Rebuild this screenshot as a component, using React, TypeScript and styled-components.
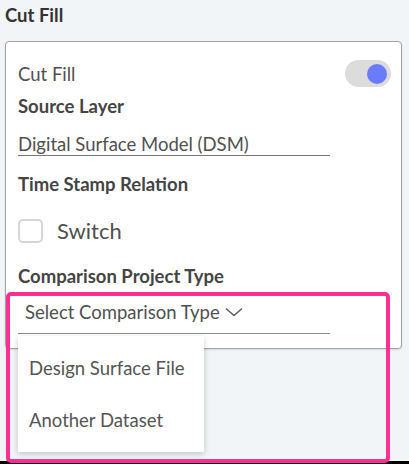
import React from 'react';
import styled, { createGlobalStyle } from 'styled-components';

const GlobalStyle = createGlobalStyle`
  html, body {
    margin: 0;
    padding: 0;
    background: #f2f5f7;
  }
  * {
    box-sizing: border-box;
  }
`;

export default function App() {
  return (
    <Page>
      <GlobalStyle />
      <Title>Cut Fill</Title>
      <Panel>
        <ToggleRow>
          <Label>Cut Fill</Label>
          <Toggle $on>
            <Knob $on />
          </Toggle>
        </ToggleRow>
        <Heading $top={8}>Source Layer</Heading>
        <TextField $top={16}>Digital Surface Model (DSM)</TextField>
        <Heading $top={17}>Time Stamp Relation</Heading>
        <CheckRow>
          <CheckBox />
          <CheckLabel>Switch</CheckLabel>
        </CheckRow>
        <Heading $top={22}>Comparison Project Type</Heading>
        <SelectWrap>
          <SelectField>
            <span>Select Comparison Type</span>
            <svg width="18" height="10" viewBox="0 0 18 10">
              <polyline points="1,1.5 9,8.5 17,1.5" fill="none" stroke="#5a5a5a" strokeWidth="1.4" />
            </svg>
          </SelectField>
          <Menu>
            <MenuItem>Design Surface File</MenuItem>
            <MenuItem>Another Dataset</MenuItem>
          </Menu>
        </SelectWrap>
      </Panel>
      <Spacer />
      <BottomBar />
      <Highlight />
    </Page>
  );
}

const Page = styled.div`
  position: relative;
  display: flex;
  flex-direction: column;
  height: 464px;
  padding: 0 7px 0 5px;
  font-family: Lato, "Noto Sans", sans-serif;
`;

const Title = styled.div`
  margin-top: 4px;
  font-size: 18.5px;
  line-height: 22px;
  font-weight: 700;
  color: #333333;
`;

const Panel = styled.div`
  display: flex;
  flex-direction: column;
  margin-top: 15px;
  padding: 18px 10px 14px 12px;
  background: #ffffff;
  border: 1px solid #a3a3a3;
  border-radius: 4px;
  box-shadow: 0 1px 2px rgba(0, 0, 0, 0.12);
`;

const ToggleRow = styled.div`
  display: flex;
  align-items: center;
  justify-content: space-between;
  height: 27px;
`;

const Label = styled.div`
  font-size: 18.5px;
  line-height: 22px;
  color: #505050;
`;

const Toggle = styled.div<{ $on?: boolean }>`
  display: flex;
  align-items: center;
  justify-content: ${(p) => (p.$on ? 'flex-end' : 'flex-start')};
  width: 46px;
  height: 27px;
  padding: 0 4px;
  border-radius: 14px;
  background: #dcdcdc;
`;

const Knob = styled.div<{ $on?: boolean }>`
  width: 20px;
  height: 20px;
  border-radius: 50%;
  background: ${(p) => (p.$on ? '#6b7bff' : '#ffffff')};
`;

const Heading = styled.div<{ $top: number }>`
  margin-top: ${(p) => p.$top}px;
  font-size: 18.5px;
  line-height: 22px;
  font-weight: 700;
  color: #444444;
`;

const TextField = styled.div<{ $top: number }>`
  width: 312px;
  margin-top: ${(p) => p.$top}px;
  font-size: 18.5px;
  line-height: 22px;
  color: #505050;
  border-bottom: 1px solid #777777;
`;

const CheckRow = styled.div`
  display: flex;
  align-items: center;
  gap: 14px;
  margin-top: 24px;
`;

const CheckBox = styled.div`
  width: 25px;
  height: 24px;
  border: 2px solid #d6d6d6;
  border-radius: 5px;
  background: #ffffff;
`;

const CheckLabel = styled.div`
  font-size: 22px;
  line-height: 24px;
  color: #505050;
`;

const SelectWrap = styled.div`
  position: relative;
  margin-top: 14px;
  width: 312px;
`;

const SelectField = styled.div`
  display: flex;
  align-items: center;
  gap: 5px;
  padding: 0 0 10px 7px;
  font-size: 18.5px;
  line-height: 22px;
  color: #505050;
  border-bottom: 1px solid #8a8a8a;
`;

const Menu = styled.div`
  position: absolute;
  top: calc(100% + 2px);
  left: 0;
  z-index: 2;
  width: 186px;
  padding: 6px 0;
  background: #ffffff;
  box-shadow: 0 2px 6px rgba(0, 0, 0, 0.2);
`;

const MenuItem = styled.div`
  display: flex;
  align-items: center;
  height: 52px;
  padding: 0 11px;
  font-size: 18.5px;
  color: #555555;
`;

const Spacer = styled.div`
  flex: 1;
`;

const BottomBar = styled.div`
  height: 3px;
  margin: 0 -7px 0 -5px;
  background: #000000;
`;

const Highlight = styled.div`
  position: absolute;
  left: 6px;
  top: 292px;
  width: 384px;
  height: 171px;
  border: 4px solid #ff2e95;
  border-radius: 5px;
  z-index: 3;
  pointer-events: none;
`;
